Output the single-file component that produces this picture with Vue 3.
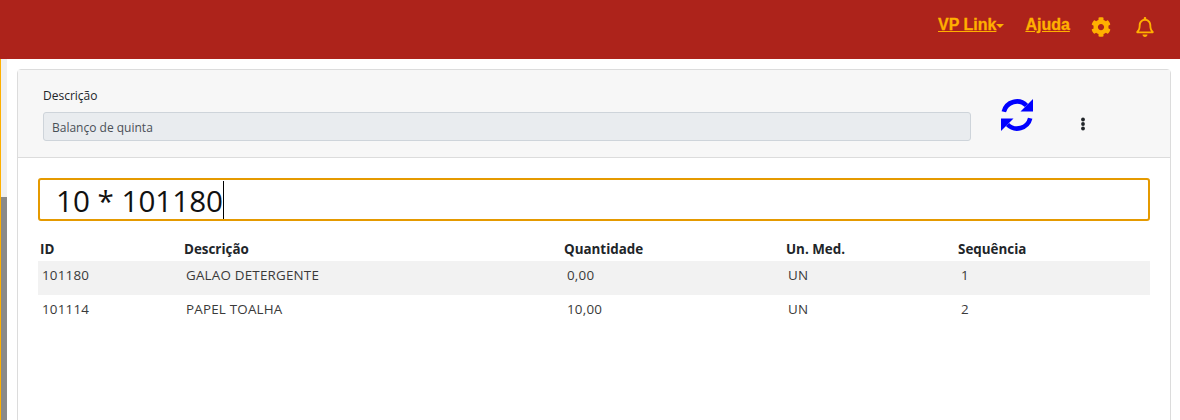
<script setup>
const rows = [
  { id: '101180', descricao: 'GALAO DETERGENTE', quantidade: '0,00', unidade: 'UN', sequencia: '1' },
  { id: '101114', descricao: 'PAPEL TOALHA', quantidade: '10,00', unidade: 'UN', sequencia: '2' }
]
</script>

<template>
  <div class="page">
    <header class="navbar">
      <a class="nav-link nav-drop">VP Link<span class="caret"></span></a>
      <a class="nav-link nav-help">Ajuda</a>
      <svg class="icon-gear" viewBox="0 0 512 512" width="20" height="20">
        <path fill="currentColor" d="M487.4 315.7l-42.6-24.6c4.3-23.2 4.3-47 0-70.2l42.6-24.6c4.9-2.8 7.1-8.6 5.5-14-11.1-35.6-30-67.8-54.7-94.6-3.8-4.1-10-5.1-14.8-2.3L380.8 110c-17.9-15.4-38.5-27.3-60.8-35.1V25.8c0-5.6-3.9-10.5-9.4-11.7-36.7-8.2-74.3-7.8-109.2 0-5.5 1.2-9.4 6.1-9.4 11.7V75c-22.2 7.9-42.8 19.8-60.8 35.1L88.7 85.5c-4.9-2.8-11-1.9-14.8 2.3-24.7 26.7-43.6 58.9-54.7 94.6-1.7 5.4.6 11.2 5.5 14L67.3 221c-4.3 23.2-4.3 47 0 70.2l-42.6 24.6c-4.9 2.8-7.1 8.6-5.5 14 11.1 35.6 30 67.8 54.7 94.6 3.8 4.1 10 5.1 14.8 2.3l42.6-24.6c17.9 15.4 38.5 27.3 60.8 35.1v49.2c0 5.6 3.9 10.5 9.4 11.7 36.7 8.2 74.3 7.8 109.2 0 5.5-1.2 9.4-6.1 9.4-11.7v-49.2c22.2-7.9 42.8-19.8 60.8-35.1l42.6 24.6c4.9 2.8 11 1.9 14.8-2.3 24.7-26.7 43.6-58.9 54.7-94.6 1.5-5.5-.7-11.3-5.6-14.1zM256 336c-44.1 0-80-35.9-80-80s35.9-80 80-80 80 35.9 80 80-35.9 80-80 80z"/>
      </svg>
      <svg class="icon-bell" viewBox="0 0 448 512" width="18" height="20">
        <path fill="currentColor" d="M439.39 362.29c-19.32-20.76-55.47-51.99-55.47-154.29 0-77.7-54.48-139.9-127.94-155.16V32c0-17.67-14.32-32-31.98-32s-31.98 14.33-31.98 32v20.84C118.56 68.1 64.08 130.3 64.08 208c0 102.3-36.15 133.53-55.47 154.29-6 6.45-8.66 14.16-8.61 21.71.11 16.4 12.98 32 32.1 32h383.8c19.12 0 32-15.6 32.1-32 .05-7.55-2.61-15.27-8.61-21.71zM67.53 368c21.22-27.97 44.42-74.33 44.53-159.42 0-.2-.06-.38-.06-.58 0-61.86 50.14-112 112-112s112 50.14 112 112c0 .2-.06.38-.06.58.11 85.1 23.31 131.46 44.53 159.42H67.53zM224 512c35.32 0 63.97-28.65 63.97-64H160.03c0 35.35 28.65 64 63.97 64z"/>
      </svg>
    </header>

    <div class="body">
      <div class="sidebar"><div class="sidebar-thumb"></div></div>

      <main class="content">
        <section class="card">
          <div class="card-header">
            <div class="field">
              <label class="field-label">Descrição</label>
              <input class="field-input" type="text" value="Balanço de quinta" disabled />
            </div>
            <svg class="icon-sync" viewBox="0 0 32 32" width="32" height="32">
              <path fill="none" stroke="currentColor" stroke-width="4.6" d="M2.8 12.7A13.5 13.5 0 0 1 25.5 6.5"/>
              <path fill="currentColor" d="M32 0v12.500H19.500z"/>
              <path fill="none" stroke="currentColor" stroke-width="4.6" d="M29.2 19.3A13.5 13.5 0 0 1 6.5 25.5"/>
              <path fill="currentColor" d="M0 32V19.500h12.500z"/>
            </svg>
            <svg class="icon-dots" viewBox="0 0 16 16" width="16" height="16">
              <circle cx="8" cy="3.500" r="1.900" fill="currentColor" />
              <circle cx="8" cy="8" r="1.900" fill="currentColor" />
              <circle cx="8" cy="12.500" r="1.900" fill="currentColor" />
            </svg>
          </div>

          <div class="card-body">
            <div class="scan-box">
              <span class="scan-text">10 * 101180</span><span class="scan-caret"></span>
            </div>

            <table class="items">
              <thead>
                <tr>
                  <th class="col-id">ID</th>
                  <th class="col-desc">Descrição</th>
                  <th class="col-qty">Quantidade</th>
                  <th class="col-un">Un. Med.</th>
                  <th>Sequência</th>
                </tr>
              </thead>
              <tbody>
                <tr v-for="row in rows" :key="row.id">
                  <td>{{ row.id }}</td>
                  <td>{{ row.descricao }}</td>
                  <td>{{ row.quantidade }}</td>
                  <td>{{ row.unidade }}</td>
                  <td>{{ row.sequencia }}</td>
                </tr>
              </tbody>
            </table>
          </div>
        </section>
      </main>
    </div>
  </div>
</template>

<style>
html,
body {
  margin: 0;
  overflow: hidden;
}
</style>

<style scoped>
.page {
  height: 420px;
  display: flex;
  flex-direction: column;
  background: #fff;
  font-family: "Open Sans", "Noto Sans", sans-serif;
  color: #212529;
  overflow: hidden;
}

.navbar {
  height: 59px;
  flex: none;
  display: flex;
  align-items: flex-start;
  background: #ad231b;
  color: #ffb000;
  box-sizing: border-box;
  padding: 15px 0 0 938px;
}

.nav-link {
  font-family: "Liberation Sans", sans-serif;
  font-size: 16px;
  font-weight: 700;
  line-height: 20px;
  text-decoration: underline;
  -webkit-text-stroke: 0.3px #ffb000;
}

.nav-drop {
  display: flex;
  align-items: center;
}

.caret {
  width: 0;
  height: 0;
  margin-top: 2px;
  border-top: 4px solid #ffb000;
  border-left: 4px solid transparent;
  border-right: 4px solid transparent;
}

.nav-help {
  margin-left: 21px;
}

.icon-gear {
  margin: 2px 0 0 21px;
}

.icon-bell {
  margin: 2px 0 0 25px;
}

.body {
  flex: 1;
  display: flex;
  min-height: 0;
}

.sidebar {
  width: 7px;
  flex: none;
  box-sizing: border-box;
  border-left: 1px solid #ffb000;
  background: #f0f0f0;
  padding-top: 138px;
}

.sidebar-thumb {
  height: 223px;
  background: #8a8a8a;
}

.content {
  flex: 1;
  min-width: 0;
  padding: 10px 9px 0 10px;
}

.card {
  height: 380px;
  border: 1px solid #dcdcdc;
  border-radius: 4px;
  box-sizing: border-box;
}

.card-header {
  height: 88px;
  display: flex;
  align-items: flex-start;
  box-sizing: border-box;
  padding: 17px 0 0 25px;
  background: #f7f7f7;
  border-bottom: 1px solid #dcdcdc;
}

.field {
  width: 928px;
  flex: none;
}

.field-label {
  display: block;
  font-size: 12px;
  line-height: 18px;
  margin-bottom: 7px;
}

.field-input {
  display: block;
  width: 100%;
  height: 29px;
  box-sizing: border-box;
  padding: 2px 8px 0;
  border: 1px solid #ced4da;
  border-radius: 3px;
  background: #e9ecef;
  color: #495057;
  font-family: inherit;
  font-size: 12px;
}

.icon-sync {
  margin: 12px 0 0 30px;
  color: #0000ff;
}

.icon-dots {
  margin: 29px 0 0 42px;
  color: #212529;
}

.card-body {
  padding: 20px 20px 0;
}

.scan-box {
  height: 43px;
  display: flex;
  align-items: center;
  box-sizing: border-box;
  padding: 2px 0 0 16px;
  border: 2px solid #e59a00;
  border-radius: 3px;
  color: #111;
  font-size: 29.6px;
}

.scan-caret {
  width: 1px;
  height: 38px;
  margin-top: -2px;
  background: #000;
}

.items {
  width: 100%;
  margin-top: 17px;
  border-collapse: collapse;
  table-layout: fixed;
  font-size: 13.4px;
}

.items th {
  height: 23px;
  box-sizing: border-box;
  padding: 0 2px 2px;
  text-align: left;
  font-weight: 700;
  font-size: 13.4px;
  color: #212529;
}

.items td {
  height: 34px;
  box-sizing: border-box;
  padding: 0 4px 6px;
  color: #3a3a3a;
  letter-spacing: 0.2px;
}

.items td:nth-child(3),
.items td:nth-child(5) {
  padding-left: 5px;
}

.items tbody tr:nth-child(odd) {
  background: #f2f2f2;
}

.col-id {
  width: 144px;
}

.col-desc {
  width: 380px;
}

.col-qty {
  width: 222px;
}

.col-un {
  width: 172px;
}
</style>
